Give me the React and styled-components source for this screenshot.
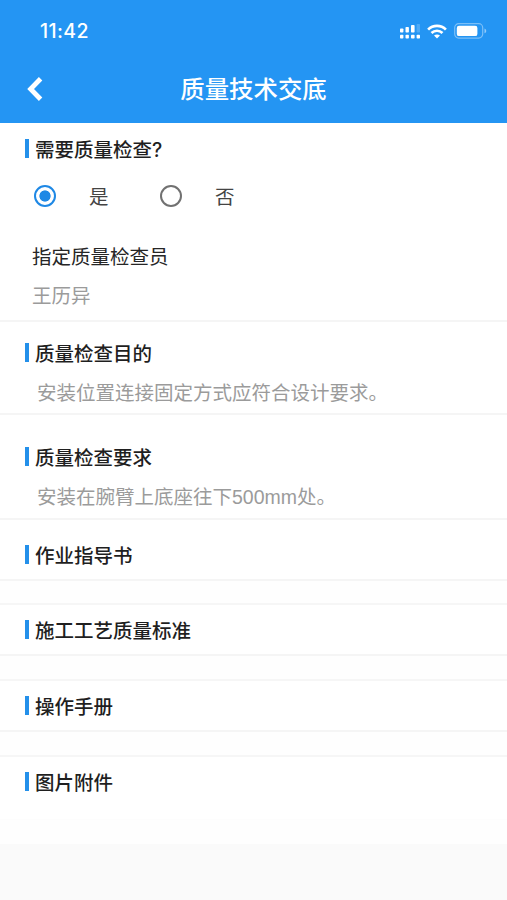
import React, { useState } from 'react';
import styled, { createGlobalStyle } from 'styled-components';

const GlobalStyle = createGlobalStyle`
  * {
    box-sizing: border-box;
  }

  body {
    margin: 0;
    background: #fafafa;
    font-family: 'Inter', 'Noto Sans CJK SC', sans-serif;
    color: #1f1f1f;
  }
`;

const Page = styled.div`
  min-height: 900px;
  background: #fafafa;
`;

const Header = styled.header`
  height: 123px;
  background: #2495f3;
  color: #fff;
`;

const StatusBar = styled.div`
  height: 62px;
  padding: 0 20px 0 40px;
  display: flex;
  align-items: center;
  justify-content: space-between;
`;

const Time = styled.span`
  font-size: 19.5px;
  font-weight: 500;
  letter-spacing: 0.4px;
`;

const StatusIcons = styled.div`
  display: flex;
  align-items: center;
  gap: 7px;

  svg {
    display: block;
  }

  svg:first-child {
    margin-right: -1px;
  }
`;

const NavBar = styled.div`
  height: 54px;
  padding: 0 26px;
  display: grid;
  grid-template-columns: 40px 1fr 40px;
  align-items: center;
`;

const BackButton = styled.button`
  padding: 0;
  border: none;
  background: none;
  color: inherit;
  display: flex;
  cursor: pointer;
`;

const Title = styled.h1`
  margin: 0;
  font-size: 24.4px;
  font-weight: 500;
  line-height: 36px;
  text-align: center;
`;

const Section = styled.section`
  height: ${(props) => props.$height}px;
  padding-top: ${(props) => props.$top}px;
  background: #fff;
  border-bottom: ${(props) => (props.$faint ? '1px solid #fdfdfd' : '2px solid #f5f5f5')};
`;

const Spacer = styled.div`
  height: ${(props) => props.$height}px;
  background: #fefefe;
  border-bottom: ${(props) => (props.$last ? 'none' : '2px solid #f6f6f6')};
`;

const Heading = styled.h2`
  margin: 0;
  padding-left: 25px;
  display: flex;
  align-items: center;
  gap: 6px;
  font-size: 19.5px;
  font-weight: 500;
  line-height: 28px;

  &::before {
    content: '';
    width: 4px;
    height: 19px;
    margin-bottom: 3px;
    background: #2490ea;
  }
`;

const Description = styled.p`
  margin: 11px 0 0;
  padding-left: 37px;
  font-family: 'Liberation Sans', 'Noto Sans CJK SC', sans-serif;
  font-size: 19.5px;
  line-height: 28px;
  color: #9b9b9b;
`;

const RadioGroup = styled.div`
  margin-top: 18px;
  padding-left: 34px;
  display: flex;
  gap: 52px;
`;

const RadioLabel = styled.label`
  display: flex;
  align-items: center;
  gap: 33px;
  font-size: 19.5px;
  line-height: 28px;
  color: #444;
  cursor: pointer;
`;

const RadioText = styled.span`
  width: 19px;
  padding-top: 3px;
  line-height: 25px;
`;

const RadioInput = styled.input`
  appearance: none;
  width: 22px;
  height: 22px;
  margin: 0;
  border: 2px solid ${(props) => (props.checked ? '#1e88e5' : '#717171')};
  border-radius: 50%;
  background: ${(props) =>
    props.checked ? 'radial-gradient(circle, #1e88e5 5.2px, transparent 6px)' : 'none'};
`;

const FieldLabel = styled.div`
  margin-top: 33px;
  padding-left: 32px;
  font-size: 19.5px;
  line-height: 28px;
  color: #262626;
`;

const FieldValue = styled.div`
  margin-top: 11px;
  padding-left: 32px;
  font-size: 19.5px;
  line-height: 28px;
  color: #9b9b9b;
`;

const SignalIcon = () => (
  <svg width="21" height="15" viewBox="0 0 21 15" fill="#fff">
    <rect x="0" y="4.5" width="3.4" height="4" rx="0.8" />
    <rect x="5.5" y="3" width="3.4" height="5.5" rx="0.8" />
    <rect x="11" y="1" width="3.6" height="7.5" rx="0.8" />
    <rect x="16.6" y="0" width="3.4" height="8.5" rx="0.8" opacity="0.2" />
    <rect x="0" y="10.8" width="3.4" height="3.8" rx="0.8" />
    <rect x="5.5" y="10.8" width="3.4" height="3.8" rx="0.8" />
    <rect x="11" y="10.8" width="3.6" height="3.8" rx="0.8" />
    <rect x="16.6" y="10.8" width="3.4" height="3.8" rx="0.8" />
  </svg>
);

const WifiIcon = () => (
  <svg width="20" height="15" viewBox="0 0 20 15" fill="none" stroke="#fff" strokeWidth="2.7">
    <path d="M1.1 5.6 C6 0.7 14 0.7 18.9 5.6" />
    <path d="M4.5 9 C7.6 6 12.4 6 15.5 9" />
    <path d="M10 14.4 L7 11.6 C8.7 10 11.3 10 13 11.6 Z" fill="#fff" stroke="none" />
  </svg>
);

const BatteryIcon = () => (
  <svg width="33" height="16" viewBox="0 0 33 16">
    <rect x="0.7" y="0.7" width="28" height="14.4" rx="4" fill="none" stroke="#fff" strokeOpacity="0.4" strokeWidth="1.2" />
    <rect x="2.8" y="2.7" width="20.6" height="10.4" rx="2.2" fill="#fff" />
    <path d="M30.5 5.5 C32.8 6.3 32.8 9.5 30.5 10.3 Z" fill="#fff" opacity="0.5" />
  </svg>
);

const BackIcon = () => (
  <svg width="18" height="26" viewBox="0 0 18 26" fill="none" stroke="#fff" strokeWidth="4.8">
    <path d="M14.6 2.8 L4.6 13 L14.6 23.2" />
  </svg>
);

const options = [
  { value: 'yes', label: '是' },
  { value: 'no', label: '否' }
];

const App = () => {
  const [needCheck, setNeedCheck] = useState('yes');

  return (
    <Page>
      <GlobalStyle />
      <Header>
        <StatusBar>
          <Time>11:42</Time>
          <StatusIcons>
            <SignalIcon />
            <WifiIcon />
            <BatteryIcon />
          </StatusIcons>
        </StatusBar>
        <NavBar>
          <BackButton type="button">
            <BackIcon />
          </BackButton>
          <Title>质量技术交底</Title>
        </NavBar>
      </Header>

      <Section $height={199} $top={13}>
        <Heading>需要质量检查?</Heading>
        <RadioGroup>
          {options.map((option) => (
            <RadioLabel key={option.value}>
              <RadioInput
                type="radio"
                name="needCheck"
                value={option.value}
                checked={needCheck === option.value}
                onChange={() => setNeedCheck(option.value)}
              />
              <RadioText>{option.label}</RadioText>
            </RadioLabel>
          ))}
        </RadioGroup>
        <FieldLabel>指定质量检查员</FieldLabel>
        <FieldValue>王历异</FieldValue>
      </Section>

      <Section $height={93} $top={18}>
        <Heading>质量检查目的</Heading>
        <Description>安装位置连接固定方式应符合设计要求。</Description>
      </Section>

      <Section $height={105} $top={29}>
        <Heading>质量检查要求</Heading>
        <Description>安装在腕臂上底座往下500mm处。</Description>
      </Section>

      <Section $height={61} $top={22}>
        <Heading>作业指导书</Heading>
      </Section>
      <Spacer $height={24} />

      <Section $height={51} $top={12}>
        <Heading>施工工艺质量标准</Heading>
      </Section>
      <Spacer $height={25} />

      <Section $height={51} $top={12}>
        <Heading>操作手册</Heading>
      </Section>
      <Spacer $height={25} />

      <Section $height={63} $top={12} $faint>
        <Heading>图片附件</Heading>
      </Section>
      <Spacer $height={24} $last />
    </Page>
  );
};

export default App;
